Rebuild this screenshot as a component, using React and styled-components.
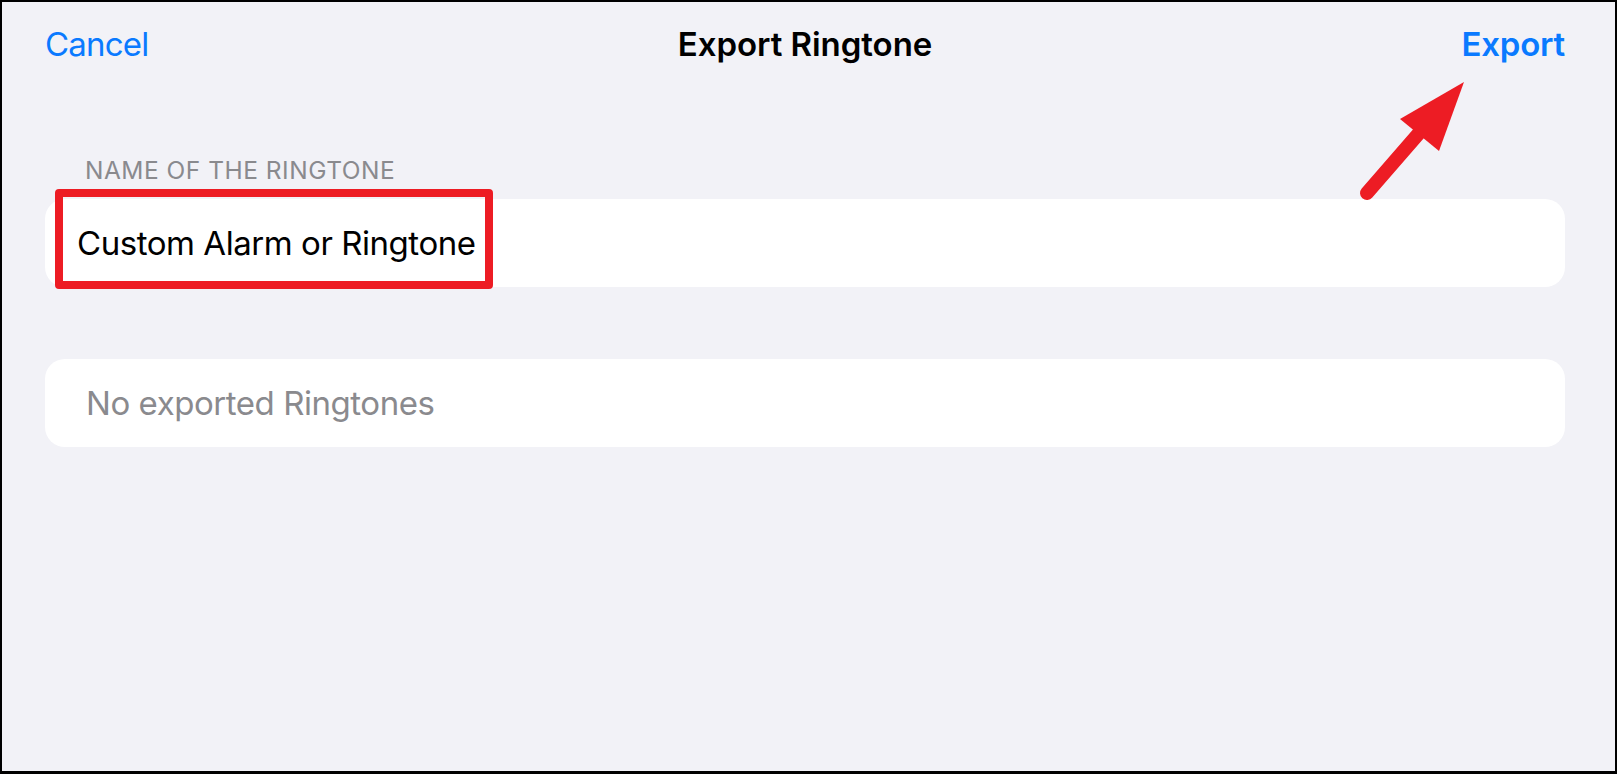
import React from 'react';
import styled, { createGlobalStyle } from 'styled-components';

const GlobalStyle = createGlobalStyle`
  html, body {
    margin: 0;
    padding: 0;
    background: #f2f2f7;
  }
  * {
    box-sizing: border-box;
  }
`;

const Frame = styled.div`
  position: relative;
  height: 100vh;
  border: solid #000;
  border-width: 2px 2px 3px 2px;
  background: #f2f2f7;
  padding: 0 50px 0 43px;
  font-family: Inter, 'Noto Sans', sans-serif;
  -webkit-font-smoothing: antialiased;
`;

const NavBar = styled.div`
  display: grid;
  grid-template-columns: 1fr auto 1fr;
  align-items: center;
  padding-top: 22px;
  height: 62px;
`;

const NavButton = styled.span`
  font-size: 33px;
  line-height: 40px;
  color: #0a7aff;
  font-weight: ${({ $bold }) => ($bold ? 600 : 400)};
  justify-self: ${({ $right }) => ($right ? 'end' : 'start')};
  letter-spacing: ${({ $bold }) => ($bold ? '-0.2px' : '-0.8px')};
`;

const Title = styled.span`
  font-size: 33px;
  line-height: 40px;
  font-weight: 600;
  color: #000;
  letter-spacing: -0.05px;
`;

const Content = styled.div`
  padding-top: 91px;
`;

const SectionLabel = styled.div`
  font-size: 24.5px;
  line-height: 30px;
  color: #8a8a8e;
  padding-left: 40px;
  text-transform: uppercase;
  letter-spacing: 0.5px;
  margin-bottom: 14px;
`;

const Field = styled.div`
  position: relative;
  height: 88px;
  background: #fff;
  border-radius: 20px;
  font-size: 33px;
  line-height: 88px;
  letter-spacing: -0.45px;
  padding-left: ${({ $inset }) => $inset}px;
  color: ${({ $muted }) => ($muted ? '#8a8a8e' : '#000')};
  margin-bottom: ${({ $gap }) => $gap || 0}px;
`;

const Highlight = styled.div`
  position: absolute;
  left: 10px;
  top: -10px;
  width: 438px;
  height: 100px;
  border: 8px solid #ed1c24;
  border-radius: 4px;
  pointer-events: none;
`;

const ArrowMark = styled.svg`
  position: absolute;
  left: 1340px;
  top: 66px;
  width: 140px;
  height: 140px;
  overflow: visible;
  pointer-events: none;
`;

export default function App() {
  return (
    <>
      <GlobalStyle />
      <Frame>
        <NavBar>
          <NavButton>Cancel</NavButton>
          <Title>Export Ringtone</Title>
          <NavButton $bold $right>Export</NavButton>
        </NavBar>
        <Content>
          <SectionLabel>Name of the Ringtone</SectionLabel>
          <Field $inset={32} $gap={72}>
            Custom Alarm or Ringtone
            <Highlight />
          </Field>
          <Field $inset={41} $muted>
            No exported Ringtones
          </Field>
        </Content>
        <ArrowMark viewBox="1338 64 140 140">
          <line x1="1363" y1="189" x2="1416" y2="128" stroke="#ed1c24" strokeWidth="14" strokeLinecap="round" />
          <polygon points="1460,78 1396,115 1435,147" fill="#ed1c24" />
        </ArrowMark>
      </Frame>
    </>
  );
}
